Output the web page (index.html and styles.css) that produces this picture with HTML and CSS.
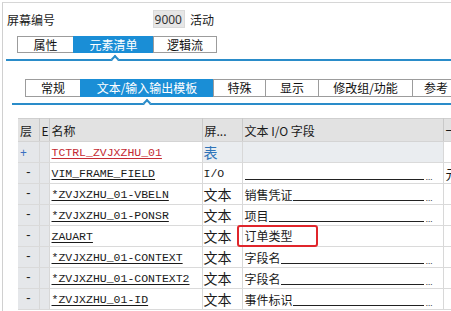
FILE: index.html
```html
<!DOCTYPE html>
<html lang="zh">
<head>
    <meta charset="UTF-8">
    <title>屏幕编号 9000</title>
    <link rel="stylesheet" href="styles.css">
</head>
<body>
    <div class="frame">
        <div class="head">
            <span class="label">屏幕编号</span>
            <span class="num">9000</span>
            <span class="state">活动</span>
        </div>

        <div class="tabs tabs-main">
            <span class="tab w56">属性</span>
            <span class="tab active w80">元素清单</span>
            <span class="tab w64 last">逻辑流</span>
        </div>
        <div class="rule rule-main"><span class="notch"></span></div>

        <div class="tabs tabs-sub">
            <span class="tab w55">常规</span>
            <span class="tab active w133">文本/输入输出模板</span>
            <span class="tab w52">特殊</span>
            <span class="tab w53">显示</span>
            <span class="tab w94">修改组/功能</span>
            <span class="tab w48 last">参考</span>
        </div>
        <div class="rule rule-sub"><span class="notch"></span></div>

        <div class="grid-wrap">
            <table class="grid">
                <colgroup>
                    <col class="c-lvl">
                    <col class="c-e">
                    <col class="c-name">
                    <col class="c-type">
                    <col class="c-text">
                    <col class="c-more">
                </colgroup>
                <thead>
                    <tr>
                        <th>层</th>
                        <th>E</th>
                        <th>名称</th>
                        <th>屏...</th>
                        <th>文本 I/O 字段</th>
                        <th>一</th>
                    </tr>
                </thead>
                <tbody>
                    <tr class="top-row">
                        <td class="lvl plus">+</td>
                        <td class="e"></td>
                        <td class="name"><span class="fld red">TCTRL_ZVJXZHU_01</span></td>
                        <td class="type blue">表</td>
                        <td class="text empty"></td>
                        <td class="more"></td>
                    </tr>
                    <tr>
                        <td class="lvl">-</td>
                        <td class="e"></td>
                        <td class="name"><span class="fld">VIM_FRAME_FIELD</span></td>
                        <td class="type mono">I/O</td>
                        <td class="text"><div class="io"><span class="fill"></span><span class="dots">...</span></div></td>
                        <td class="more">元</td>
                    </tr>
                    <tr>
                        <td class="lvl">-</td>
                        <td class="e"></td>
                        <td class="name"><span class="fld">*ZVJXZHU_01-VBELN</span></td>
                        <td class="type">文本</td>
                        <td class="text"><div class="io"><span>销售凭证</span><span class="fill"></span><span class="dots">...</span></div></td>
                        <td class="more"></td>
                    </tr>
                    <tr>
                        <td class="lvl">-</td>
                        <td class="e"></td>
                        <td class="name"><span class="fld">*ZVJXZHU_01-PONSR</span></td>
                        <td class="type">文本</td>
                        <td class="text"><div class="io"><span>项目</span><span class="fill"></span><span class="dots">...</span></div></td>
                        <td class="more"></td>
                    </tr>
                    <tr>
                        <td class="lvl">-</td>
                        <td class="e"></td>
                        <td class="name"><span class="fld">ZAUART</span></td>
                        <td class="type">文本</td>
                        <td class="text marked"><div class="io"><span class="mark">订单类型</span></div></td>
                        <td class="more"></td>
                    </tr>
                    <tr>
                        <td class="lvl">-</td>
                        <td class="e"></td>
                        <td class="name"><span class="fld">*ZVJXZHU_01-CONTEXT</span></td>
                        <td class="type">文本</td>
                        <td class="text"><div class="io"><span>字段名</span><span class="fill"></span><span class="dots">...</span></div></td>
                        <td class="more"></td>
                    </tr>
                    <tr>
                        <td class="lvl">-</td>
                        <td class="e"></td>
                        <td class="name"><span class="fld">*ZVJXZHU_01-CONTEXT2</span></td>
                        <td class="type">文本</td>
                        <td class="text"><div class="io"><span>字段名</span><span class="fill"></span><span class="dots">...</span></div></td>
                        <td class="more"></td>
                    </tr>
                    <tr>
                        <td class="lvl">-</td>
                        <td class="e"></td>
                        <td class="name"><span class="fld">*ZVJXZHU_01-ID</span></td>
                        <td class="type">文本</td>
                        <td class="text"><div class="io"><span>事件标识</span><span class="fill"></span><span class="dots">...</span></div></td>
                        <td class="more"></td>
                    </tr>
                </tbody>
            </table>
        </div>
    </div>
</body>
</html>
```

FILE: styles.css
```css
* {
    box-sizing: border-box;
    margin: 0;
    padding: 0;
}
body {
    width: 451px;
    height: 311px;
    overflow: hidden;
    background: #fff;
    font-family: "Noto Sans CJK SC", "Noto Sans", sans-serif;
    font-size: 12px;
    color: #1a1a1a;
}
.frame {
    margin: 2px 0 0 2px;
    height: 309px;
    border-top: 1px solid #d6d6d6;
    border-left: 1px solid #d0d0d0;
}
.head {
    display: flex;
    align-items: center;
    height: 18px;
    margin-top: 7px;
    padding-left: 4px;
}
.label {
    width: 146px;
}
.num {
    width: 32px;
    height: 18px;
    line-height: 17px;
    padding-right: 2px;
    text-align: right;
    background: #e6e6e6;
    border: 1px solid #dadada;
    font-family: "Noto Sans", sans-serif;
    color: #333;
}
.state {
    margin-left: 5px;
}
.tabs {
    display: flex;
    white-space: nowrap;
}
.tab {
    flex: none;
    text-align: center;
    border: 1px solid #9c9c9c;
    border-right: none;
    background: #fff;
    color: #111;
}
.tab.last {
    border-right: 1px solid #9c9c9c;
}
.tab.active {
    background: #1a8ed6;
    border-color: #1a8ed6;
    color: #fff;
}
.tabs-main {
    margin: 8px 0 0 14px;
    height: 17px;
}
.tabs-main .tab {
    height: 17px;
    line-height: 15px;
}
.tabs-sub {
    margin: 18px 0 0 22px;
    height: 18px;
}
.tabs-sub .tab {
    height: 18px;
    line-height: 16px;
}
.w48 { width: 48px; }
.w52 { width: 52px; }
.w53 { width: 53px; }
.w55 { width: 55px; }
.w56 { width: 56px; }
.w64 { width: 64px; }
.w80 { width: 80px; }
.w94 { width: 94px; }
.w133 { width: 133px; }

.rule {
    position: relative;
    height: 2px;
    background: #2a8cc9;
}
.rule-main {
    margin: 6px 0 0 3px;
}
.rule-sub {
    margin: 6px 0 0 9px;
}
.notch {
    position: absolute;
    top: -3px;
    width: 6px;
    height: 6px;
    background: #fff;
    border-top: 2px solid #2a8cc9;
    border-left: 2px solid #2a8cc9;
    transform: rotate(45deg);
}
.rule-main .notch {
    left: 106px;
}
.rule-sub .notch {
    left: 132px;
}

.grid-wrap {
    margin: 13px 0 0 15px;
    overflow: hidden;
}
.grid {
    table-layout: fixed;
    width: 470px;
    border-collapse: collapse;
    border-top: 1px solid #cfcfcf;
}
.c-lvl { width: 21px; }
.c-e { width: 10px; }
.c-name { width: 153px; }
.c-type { width: 40px; }
.c-text { width: 201px; }
.c-more { width: 45px; }
.grid th {
    height: 23px;
    padding-left: 2px;
    text-align: left;
    font-weight: normal;
    background: #e2e2e2;
    border-right: 1px solid #c9c9c9;
    border-bottom: 1px solid #d4d4d4;
    white-space: nowrap;
    overflow: hidden;
}
.grid td {
    height: 21px;
    border-right: 1px solid #d8d8d8;
    border-bottom: 1px solid #dadada;
    white-space: nowrap;
    overflow: hidden;
}
.grid td.lvl,
.grid td.e {
    background: #e5e7ea;
}
.lvl {
    text-align: center;
    font-family: "Liberation Mono", monospace;
}
.lvl.plus {
    text-align: left;
    padding-left: 2px;
    color: #3a6fc0;
    font-family: "Noto Sans", sans-serif;
}
.name {
    padding-left: 2px;
    font-family: "Liberation Mono", monospace;
    font-size: 11.5px;
}
.fld {
    text-decoration: underline;
    text-decoration-thickness: 1px;
    text-underline-offset: 2px;
}
.fld.red {
    color: #c42a33;
}
.type {
    padding-left: 1px;
    font-size: 14px;
    overflow: hidden;
}
.type.mono {
    font-family: "Liberation Mono", monospace;
    font-size: 11.5px;
}
.type.blue {
    color: #2f74b8;
}
.top-row .type,
.top-row .text {
    background: #eaedf0;
}
.text {
    padding: 0 10px 0 2px;
}
.grid td.marked {
    overflow: visible;
}
.io {
    display: flex;
    align-items: flex-end;
    height: 17px;
}
.fill {
    flex: 1;
    border-bottom: 1px solid #222;
    margin-bottom: 2px;
}
.dots {
    font-size: 8px;
    line-height: 8px;
    margin: 0 0 1px 2px;
    color: #333;
}
.mark {
    display: inline-block;
    margin: 0 0 -2px -8px;
    padding: 0 23px 0 6px;
    line-height: 18px;
    border: 2px solid #e0252b;
    border-radius: 3px;
}
.more {
    padding-left: 2px;
    font-size: 13px;
}
```
